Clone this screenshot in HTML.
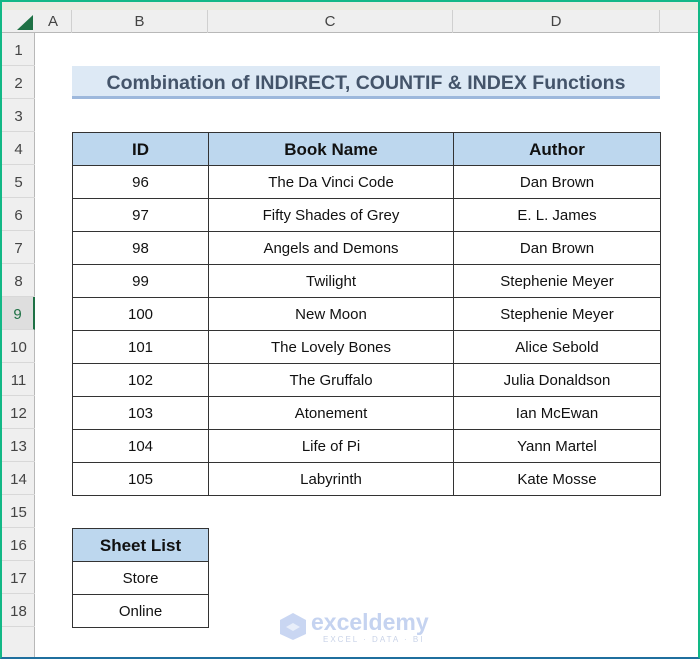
<!DOCTYPE html>
<html><head><meta charset="utf-8"><style>
*{margin:0;padding:0;box-sizing:border-box}
body{width:700px;height:659px;overflow:hidden;background:#fff;font-family:"Liberation Sans",sans-serif;position:relative}
.a{position:absolute}
.frame{left:0;top:0;width:700px;height:659px;border:2px solid #12b886;border-bottom-color:#1f6f9e}
.topstrip{left:2px;top:2px;width:696px;height:8px;background:#e9ecdf}
.colhdr{left:2px;top:10px;width:696px;height:23px;background:#efefef;border-bottom:1px solid #b8b8b8}
.rowhdr{left:2px;top:33px;width:33px;height:624px;background:#efefef;border-right:1px solid #b8b8b8}
.ch{top:10px;height:23px;line-height:23px;text-align:center;font-size:15px;color:#444;border-right:1px solid #d0d0d0}
.rh{left:2px;width:33px;height:33px;line-height:36px;text-align:center;font-size:15px;color:#444;border-bottom:1px solid #d8d8d8}
.c{position:absolute;height:34px;line-height:34px;text-align:center;font-size:15px;color:#111;border:1px solid #333;white-space:nowrap}
.h{background:#bdd7ee;font-weight:bold;font-size:17px}
</style></head><body>
<div class="a topstrip"></div>
<div class="a colhdr"></div>
<div class="a rowhdr"></div>
<svg class="a" style="left:14px;top:13px" width="20" height="18"><polygon points="19,2 19,17 3,17" fill="#1e7145"/></svg>
<div class="a ch" style="left:35px;width:37px">A</div>
<div class="a ch" style="left:72px;width:136px">B</div>
<div class="a ch" style="left:208px;width:245px">C</div>
<div class="a ch" style="left:453px;width:207px">D</div>
<div class="a rh" style="top:33px">1</div>
<div class="a rh" style="top:66px">2</div>
<div class="a rh" style="top:99px">3</div>
<div class="a rh" style="top:132px">4</div>
<div class="a rh" style="top:165px">5</div>
<div class="a rh" style="top:198px">6</div>
<div class="a rh" style="top:231px">7</div>
<div class="a rh" style="top:264px">8</div>
<div class="a rh" style="top:297px;background:#dedede;color:#1e7145;border-right:2px solid #1e7145">9</div>
<div class="a rh" style="top:330px">10</div>
<div class="a rh" style="top:363px">11</div>
<div class="a rh" style="top:396px">12</div>
<div class="a rh" style="top:429px">13</div>
<div class="a rh" style="top:462px">14</div>
<div class="a rh" style="top:495px">15</div>
<div class="a rh" style="top:528px">16</div>
<div class="a rh" style="top:561px">17</div>
<div class="a rh" style="top:594px">18</div>

<div class="a" style="left:72px;top:66px;width:588px;height:33px;background:#dde9f5;border-bottom:3px solid #9db8dc;text-align:center;line-height:34px;font-size:19.5px;font-weight:bold;color:#44546a">Combination of INDIRECT, COUNTIF &amp; INDEX Functions</div>

<div class="c h" style="left:72px;top:132px;width:137px">ID</div><div class="c h" style="left:208px;top:132px;width:246px">Book Name</div><div class="c h" style="left:453px;top:132px;width:208px">Author</div>
<div class="c" style="left:72px;top:165px;width:137px">96</div><div class="c" style="left:208px;top:165px;width:246px">The Da Vinci Code</div><div class="c" style="left:453px;top:165px;width:208px">Dan Brown</div>
<div class="c" style="left:72px;top:198px;width:137px">97</div><div class="c" style="left:208px;top:198px;width:246px">Fifty Shades of Grey</div><div class="c" style="left:453px;top:198px;width:208px">E. L. James</div>
<div class="c" style="left:72px;top:231px;width:137px">98</div><div class="c" style="left:208px;top:231px;width:246px">Angels and Demons</div><div class="c" style="left:453px;top:231px;width:208px">Dan Brown</div>
<div class="c" style="left:72px;top:264px;width:137px">99</div><div class="c" style="left:208px;top:264px;width:246px">Twilight</div><div class="c" style="left:453px;top:264px;width:208px">Stephenie Meyer</div>
<div class="c" style="left:72px;top:297px;width:137px">100</div><div class="c" style="left:208px;top:297px;width:246px">New Moon</div><div class="c" style="left:453px;top:297px;width:208px">Stephenie Meyer</div>
<div class="c" style="left:72px;top:330px;width:137px">101</div><div class="c" style="left:208px;top:330px;width:246px">The Lovely Bones</div><div class="c" style="left:453px;top:330px;width:208px">Alice Sebold</div>
<div class="c" style="left:72px;top:363px;width:137px">102</div><div class="c" style="left:208px;top:363px;width:246px">The Gruffalo</div><div class="c" style="left:453px;top:363px;width:208px">Julia Donaldson</div>
<div class="c" style="left:72px;top:396px;width:137px">103</div><div class="c" style="left:208px;top:396px;width:246px">Atonement</div><div class="c" style="left:453px;top:396px;width:208px">Ian McEwan</div>
<div class="c" style="left:72px;top:429px;width:137px">104</div><div class="c" style="left:208px;top:429px;width:246px">Life of Pi</div><div class="c" style="left:453px;top:429px;width:208px">Yann Martel</div>
<div class="c" style="left:72px;top:462px;width:137px">105</div><div class="c" style="left:208px;top:462px;width:246px">Labyrinth</div><div class="c" style="left:453px;top:462px;width:208px">Kate Mosse</div>

<div class="c h" style="left:72px;top:528px;width:137px">Sheet List</div>
<div class="c" style="left:72px;top:561px;width:137px">Store</div>
<div class="c" style="left:72px;top:594px;width:137px">Online</div>

<svg class="a" style="left:278px;top:611px" width="30" height="30"><polygon points="15,2 28,9 28,23 15,29 2,23 2,9" fill="#c9d6f2"/><polygon points="15,12 22,16 15,20 8,16" fill="#e8eefa"/></svg>
<div class="a" style="left:311px;top:609px;font-size:23px;font-weight:bold;color:#c5d3f0">exceldemy</div>
<div class="a" style="left:323px;top:635px;font-size:8px;letter-spacing:2px;color:#c9d3e8">EXCEL · DATA · BI</div>
<div class="a frame"></div>
</body></html>
